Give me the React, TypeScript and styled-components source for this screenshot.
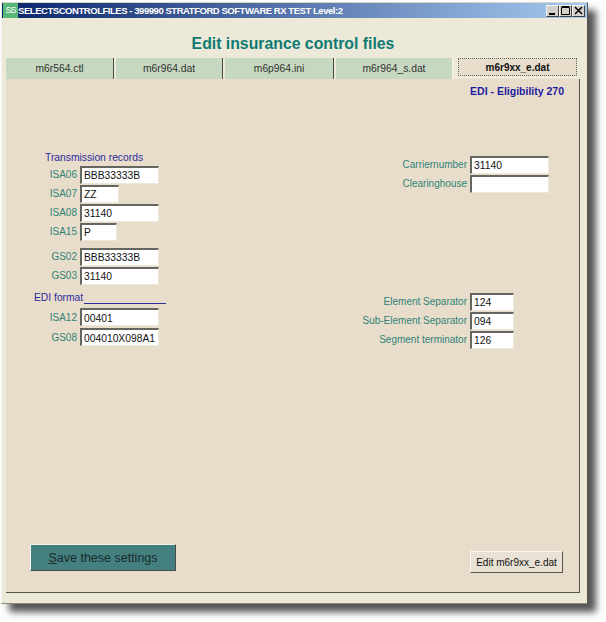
import styled, { createGlobalStyle } from "styled-components";

const GlobalStyle = createGlobalStyle`
  html, body {
    margin: 0;
    padding: 0;
    background: #ffffff;
  }
  body {
    font-family: "Liberation Sans", Arial, sans-serif;
    font-size: 10px;
  }
`;

const tabs = ["m6r564.ctl", "m6r964.dat", "m6p964.ini", "m6r964_s.dat"];

function App() {
  return (
    <>
      <GlobalStyle />
      <Page>
        <Window>
          <TitleBar>
            <AppIcon>SS</AppIcon>
            <TitleText>SELECTSCONTROLFILES - 399990 STRATFORD SOFTWARE RX TEST Level:2</TitleText>
            <WindowButtons>
              <WindowButton>
                <svg width="9" height="9" viewBox="0 0 9 9">
                  <rect x="1" y="7" width="6" height="2" fill="#000" />
                </svg>
              </WindowButton>
              <WindowButton>
                <svg width="9" height="9" viewBox="0 0 9 9">
                  <path d="M0.5 1.5h8v7h-8z M0.5 0.5h8" fill="none" stroke="#000" />
                </svg>
              </WindowButton>
              <WindowButton>
                <svg width="9" height="9" viewBox="0 0 9 9">
                  <path d="M1 1l7 7M8 1l-7 7" fill="none" stroke="#000" strokeWidth="1.5" />
                </svg>
              </WindowButton>
            </WindowButtons>
          </TitleBar>
          <Heading>Edit insurance control files</Heading>
          <TabRow>
            {tabs.map((t, i) => (
              <Tab key={t} $width={[108, 107, 109, 117][i]}>
                {t}
              </Tab>
            ))}
            <ActiveTab>m6r9xx_e.dat</ActiveTab>
          </TabRow>
          <Panel>
            <SubTitle>EDI - Eligibility 270</SubTitle>
            <Columns>
              <LeftColumn>
                <SectionLabel>Transmission records</SectionLabel>
                <Row>
                  <FieldLabel>ISA06</FieldLabel>
                  <Input $width={79} defaultValue="BBB33333B" />
                </Row>
                <Row>
                  <FieldLabel>ISA07</FieldLabel>
                  <Input $width={39} defaultValue="ZZ" />
                </Row>
                <Row>
                  <FieldLabel>ISA08</FieldLabel>
                  <Input $width={79} defaultValue="31140" />
                </Row>
                <Row>
                  <FieldLabel>ISA15</FieldLabel>
                  <Input $width={37} defaultValue="P" />
                </Row>
                <RowGap />
                <Row>
                  <FieldLabel>GS02</FieldLabel>
                  <Input $width={79} defaultValue="BBB33333B" />
                </Row>
                <Row>
                  <FieldLabel>GS03</FieldLabel>
                  <Input $width={79} defaultValue="31140" />
                </Row>
                <FormatLabel>
                  <span>EDI format</span>
                  <FormatRule />
                </FormatLabel>
                <FormatRow>
                  <FieldLabel>ISA12</FieldLabel>
                  <Input $width={79} defaultValue="00401" />
                </FormatRow>
                <FormatRow>
                  <FieldLabel>GS08</FieldLabel>
                  <Input $width={79} defaultValue="004010X098A1" />
                </FormatRow>
              </LeftColumn>
              <RightColumn>
                <RightRow>
                  <FieldLabel>Carriernumber</FieldLabel>
                  <Input $width={79} defaultValue="31140" />
                </RightRow>
                <RightRow>
                  <FieldLabel>Clearinghouse</FieldLabel>
                  <Input $width={79} defaultValue="" />
                </RightRow>
                <RightGap />
                <RightRow>
                  <FieldLabel>Element Separator</FieldLabel>
                  <Input $width={44} defaultValue="124" />
                </RightRow>
                <RightRow>
                  <FieldLabel>Sub-Element Separator</FieldLabel>
                  <Input $width={44} defaultValue="094" />
                </RightRow>
                <RightRow>
                  <FieldLabel>Segment terminator</FieldLabel>
                  <Input $width={44} defaultValue="126" />
                </RightRow>
              </RightColumn>
            </Columns>
            <Footer>
              <SaveButton>
                <u>S</u>ave these settings
              </SaveButton>
              <EditButton>Edit m6r9xx_e.dat</EditButton>
            </Footer>
          </Panel>
        </Window>
      </Page>
    </>
  );
}

export default App;

const Page = styled.div`
  width: 606px;
  height: 622px;
  padding: 2px 0 0 1px;
  box-sizing: border-box;
  overflow: hidden;
`;

const Window = styled.div`
  width: 587px;
  height: 602px;
  box-sizing: border-box;
  display: flex;
  flex-direction: column;
  background: #ece9d8;
  border: 1px solid;
  border-color: #d8d5c4 #55534c #8a8878 #f4f2e8;
  box-shadow: 8px 8px 7px #555555;
`;

const TitleBar = styled.div`
  height: 15px;
  display: flex;
  align-items: center;
  background: linear-gradient(90deg, #0a246a, #a6caf0);
  flex-shrink: 0;
`;

const AppIcon = styled.div`
  width: 15px;
  height: 15px;
  margin-left: 1px;
  background: #58b878;
  color: #ffffff;
  font-size: 9px;
  line-height: 14px;
  letter-spacing: -1px;
  text-align: center;
  flex-shrink: 0;
`;

const TitleText = styled.div`
  margin-left: 0;
  color: #ffffff;
  font-size: 9.5px;
  letter-spacing: -0.45px;
  font-weight: bold;
  white-space: nowrap;
`;

const WindowButtons = styled.div`
  margin-left: auto;
  margin-right: 2px;
  display: flex;
`;

const WindowButton = styled.div`
  width: 13px;
  height: 12px;
  box-sizing: border-box;
  display: flex;
  align-items: center;
  justify-content: center;
  background: #d4d0c8;
  border: 1px solid;
  border-color: #f4f4f4 #404040 #404040 #f4f4f4;
`;

const Heading = styled.h1`
  margin: 16px 0 0;
  height: 24px;
  padding-right: 3px;
  font-size: 15.8px;
  line-height: 20px;
  font-weight: bold;
  color: #0f7a72;
  text-align: center;
`;

const TabRow = styled.div`
  height: 21px;
  margin-left: 4px;
  display: flex;
  flex-shrink: 0;
`;

const Tab = styled.div<{ $width: number }>`
  width: ${(p) => p.$width}px;
  margin-right: 2px;
  box-sizing: border-box;
  background: #c6d9c0;
  color: #333333;
  font-size: 10.3px;
  line-height: 21px;
  text-align: center;
  border-right: 1px solid #4a4a44;
  &:nth-child(4) {
    border-right: 1px solid #f4f4ec;
    margin-right: 5px;
  }
`;

const ActiveTab = styled.div`
  width: 119px;
  height: 18px;
  box-sizing: border-box;
  background: #e8dccb;
  color: #111111;
  font-weight: bold;
  font-size: 10px;
  line-height: 17px;
  text-align: center;
  border: 1px dotted #66645c;
`;

const Panel = styled.div`
  width: 574px;
  height: 514px;
  margin-left: 4px;
  box-sizing: border-box;
  display: flex;
  flex-direction: column;
  background: #e8dccb;
  border-right: 1px solid #55534c;
  border-bottom: 1px solid #55534c;
`;

const SubTitle = styled.div`
  margin: 5px 15px 0 0;
  height: 14px;
  font-weight: bold;
  font-size: 10.5px;
  line-height: 14px;
  color: #1c1ca0;
  text-align: right;
`;

const Columns = styled.div`
  margin-top: 53px;
  display: flex;
  justify-content: space-between;
  padding-right: 44px;
`;

const LeftColumn = styled.div`
  display: flex;
  flex-direction: column;
  width: 160px;
`;

const RightColumn = styled.div`
  display: flex;
  flex-direction: column;
  width: 200px;
  margin-top: 4px;
`;

const SectionLabel = styled.div`
  margin-left: 39px;
  height: 14px;
  font-size: 10.3px;
  line-height: 14px;
  color: #2c2c9c;
`;

const Row = styled.div`
  display: grid;
  grid-template-columns: 71px auto;
  column-gap: 3px;
  justify-content: start;
  align-items: center;
  height: 19px;
`;

const FormatRow = styled(Row)`
  height: 20px;
`;

const RightRow = styled(Row)`
  grid-template-columns: 197px auto;
  height: 19px;
  margin-left: -65px;
`;

const RowGap = styled.div`
  height: 6px;
`;

const RightGap = styled.div`
  height: 99px;
`;

const FieldLabel = styled.span`
  font-size: 10px;
  color: #2f8478;
  text-align: right;
  white-space: nowrap;
`;

const Input = styled.input<{ $width: number }>`
  width: ${(p) => p.$width}px;
  height: 18px;
  box-sizing: border-box;
  padding: 1px 2px 0;
  background: #ffffff;
  color: #111111;
  font-family: "Liberation Sans", Arial, sans-serif;
  font-size: 10.3px;
  border: 1px solid;
  border-color: #666660 #ece9d8 #ece9d8 #666660;
  border-top-width: 2px;
  border-left-width: 2px;
  outline: none;
`;

const FormatLabel = styled.div`
  margin: 6px 0 2px 28px;
  height: 14px;
  display: flex;
  align-items: flex-end;
  column-gap: 1px;
  font-size: 10.3px;
  line-height: 14px;
  color: #2c2c9c;
  white-space: nowrap;
`;

const FormatRule = styled.span`
  display: block;
  width: 84px;
  height: 1px;
  margin-bottom: 1px;
  background: #2c2c9c;
`;

const Footer = styled.div`
  margin-top: auto;
  padding: 0 16px 19px 24px;
  display: flex;
  justify-content: space-between;
  align-items: flex-end;
`;

const SaveButton = styled.button`
  width: 146px;
  height: 27px;
  margin-bottom: 2px;
  padding: 0;
  box-sizing: border-box;
  background: #43807f;
  color: #1c2c2c;
  font-family: "Liberation Sans", Arial, sans-serif;
  font-size: 12.5px;
  border: 1px solid;
  border-color: #f4f2e8 #4a4a44 #4a4a44 #f4f2e8;
`;

const EditButton = styled.button`
  width: 93px;
  height: 22px;
  padding: 0;
  box-sizing: border-box;
  background: #e9e1d3;
  color: #111111;
  font-family: "Liberation Sans", Arial, sans-serif;
  font-size: 10px;
  border: 1px solid;
  border-color: #f8f6ee #55534c #55534c #f8f6ee;
`;
